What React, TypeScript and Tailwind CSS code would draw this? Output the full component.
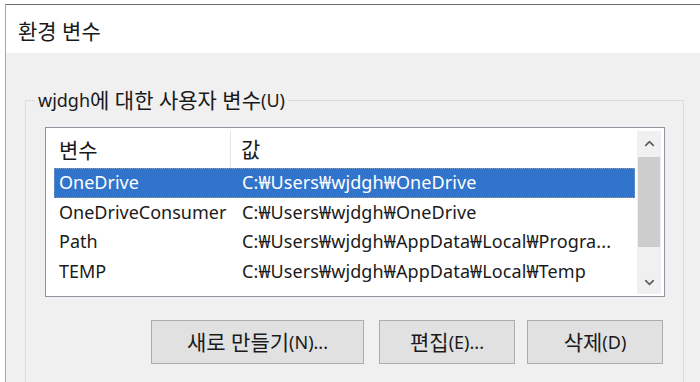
import { ChevronUp, ChevronDown } from "lucide-react";
import type { ReactNode } from "react";

type EnvVar = {
  name: string;
  value: string;
};

const userVars: EnvVar[] = [
  { name: "OneDrive", value: "C:₩Users₩wjdgh₩OneDrive" },
  { name: "OneDriveConsumer", value: "C:₩Users₩wjdgh₩OneDrive" },
  { name: "Path", value: "C:₩Users₩wjdgh₩AppData₩Local₩Progra..." },
  { name: "TEMP", value: "C:₩Users₩wjdgh₩AppData₩Local₩Temp" },
];

const font = "font-['Noto_Sans','Noto_Sans_CJK_KR',sans-serif]";

// Hangul renders larger than Latin in the original (Malgun Gothic), so bump it
function K({ children }: { children: ReactNode }) {
  return <span className="text-[21px] leading-none">{children}</span>;
}

function VarRow({ item, selected }: { item: EnvVar; selected?: boolean }) {
  return (
    <div
      className={
        selected
          ? "ml-[5px] mr-[2px] flex h-[29.5px] shrink-0 items-center border border-dotted border-[#7f9cc4] bg-[#3174cc] text-white"
          : "ml-[5px] mr-[2px] flex h-[29.5px] shrink-0 items-center border border-transparent text-[#1a1a1a]"
      }
    >
      <span className="w-[182px] shrink-0 truncate pl-[4px]">{item.name}</span>
      <span className="truncate pl-[5px] tracking-[0.1px]">{item.value}</span>
    </div>
  );
}

function ScrollBar() {
  return (
    <div className="flex w-[24px] shrink-0 flex-col bg-[#f0f0f0]">
      <div className="flex h-[24px] items-center justify-center text-[#606060]">
        <ChevronUp size={15} strokeWidth={2.8} />
      </div>
      <div className="mx-[1px] mt-[2px] h-[90px] bg-[#cdcdcd]" />
      <div className="flex-1" />
      <div className="flex h-[24px] items-center justify-center text-[#606060]">
        <ChevronDown size={15} strokeWidth={2.8} />
      </div>
    </div>
  );
}

function WinButton({ children, className }: { children: ReactNode; className?: string }) {
  return (
    <button
      className={
        "flex h-[44px] shrink-0 items-center justify-center border border-[#adadad] bg-[#e1e1e1] text-[#1a1a1a] " +
        (className ?? "")
      }
    >
      {children}
    </button>
  );
}

export default function App() {
  return (
    <div className={`h-[382px] w-[700px] overflow-hidden bg-white pl-[5px] pt-[4px] text-[18px] ${font}`}>
      <div className="flex h-full flex-col border-l border-t border-l-[#a8a8a8] border-t-[#6b6b6b]">
        {/* Title bar */}
        <div className="flex h-[48px] shrink-0 items-center bg-white pl-[12px] pt-[6px] text-[21px] text-[#1a1a1a]">
          환경 변수
        </div>

        {/* Dialog body */}
        <div className="flex-1 overflow-hidden bg-[#f0f0f0] pl-[19px] pt-[47px]">
          <div className="relative h-[320px] w-[659px] border border-[#dcdcdc] pl-[19px] pt-[26px]">
            <span className="absolute left-[9px] top-[-13px] flex h-[24px] items-center bg-[#f0f0f0] px-[3px] text-[#1a1a1a]">
              wjdgh<K>에 대한 사용자 변수</K>(U)
            </span>

            {/* List view */}
            <div className="flex h-[170px] w-[620px] border border-[#8f959e] bg-white p-[3px] pb-[2px]">
              <div className="flex min-w-0 flex-1 flex-col overflow-hidden">
                <div className="flex h-[37px] shrink-0 items-center text-[#1a1a1a]">
                  <div className="flex h-full w-[182px] shrink-0 items-center border-r border-[#e5e5e5] pl-[10px] pt-[2px]">
                    <K>변수</K>
                  </div>
                  <div className="pl-[10px] pt-[2px]">
                    <K>값</K>
                  </div>
                </div>
                {userVars.map((v, i) => (
                  <VarRow key={v.name} item={v} selected={i === 0} />
                ))}
              </div>
              <ScrollBar />
            </div>

            {/* Buttons */}
            <div className="mt-[23px] flex">
              <WinButton className="ml-[106px] w-[213px]">
                <K>새로 만들기</K>(N)...
              </WinButton>
              <WinButton className="ml-[15px] w-[136px]">
                <K>편집</K>(E)...
              </WinButton>
              <WinButton className="ml-[12px] w-[136px]">
                <K>삭제</K>(D)
              </WinButton>
            </div>
          </div>
        </div>
      </div>
    </div>
  );
}
